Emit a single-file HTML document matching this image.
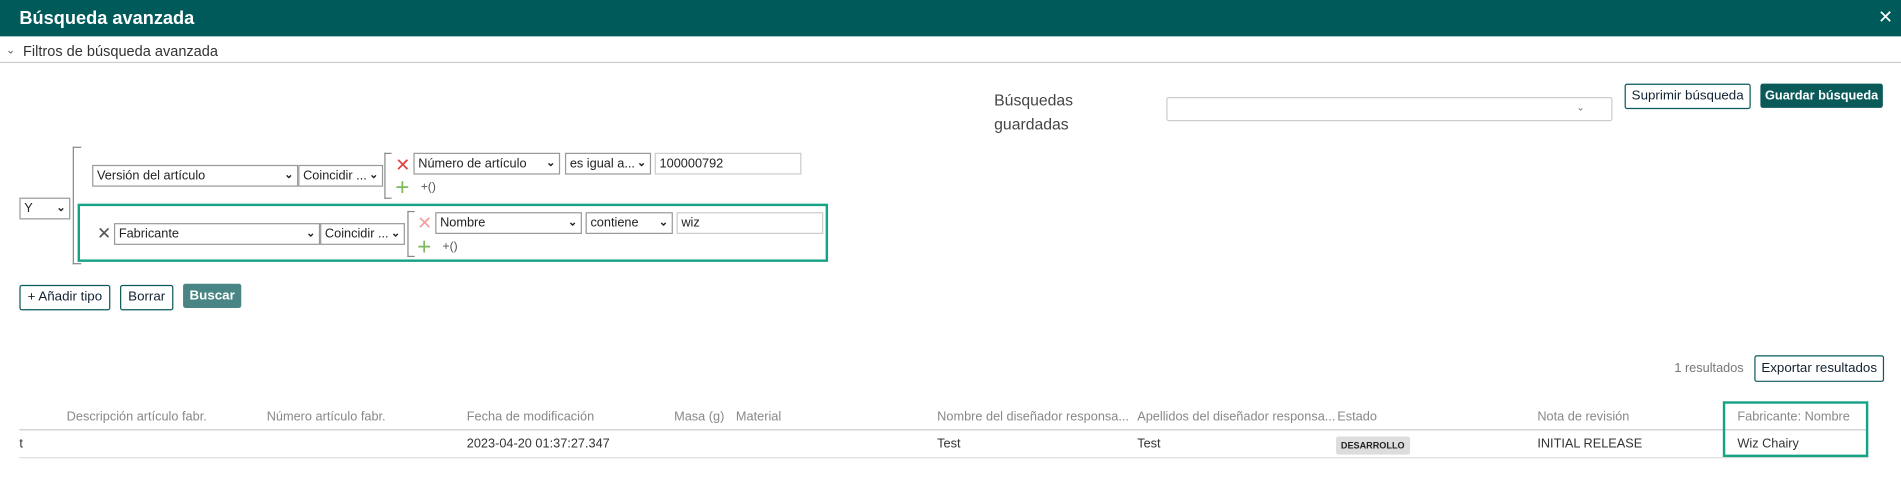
<!DOCTYPE html>
<html><head><meta charset="utf-8"><style>
*{box-sizing:border-box;margin:0;padding:0}
body{width:1901px;height:479px;overflow:hidden;background:#fff;font-family:"Liberation Sans",sans-serif;font-size:11px;color:#333;position:relative}
#w{position:absolute;left:0;top:0;width:1568px;height:395px;transform:scale(1.2124);transform-origin:0 0}
.a{position:absolute}
.hdr{left:0;top:0;width:1568px;height:30px;background:#005a5a;color:#fff}
.sel{position:absolute;border:1px solid #999;height:18px;background:#fff;font-size:10.5px;line-height:16px;padding-left:3px;color:#222;white-space:nowrap;overflow:hidden}
.chev{position:absolute;right:3px;top:-1px;font-size:9px;font-weight:bold;color:#222}
.btn{position:absolute;border:1px solid #0b5a5a;border-radius:2px;height:21px;font-size:11px;line-height:19px;text-align:center;color:#123;background:#fff;white-space:nowrap}
.th{position:absolute;top:338px;color:#888;font-size:10.5px;white-space:nowrap}
.td{position:absolute;top:360px;color:#333;font-size:10.5px;white-space:nowrap}
</style></head><body><div id="w">
<div class="a hdr"><div class="a" style="left:16px;top:7px;font-size:15px;font-weight:bold">Búsqueda avanzada</div>
<div class="a" style="left:1549px;top:5px;font-size:15px">✕</div></div>
<div class="a" style="left:5px;top:36px;font-size:9px;color:#555">⌄</div>
<div class="a" style="left:19px;top:35px;font-size:12px;color:#333">Filtros de búsqueda avanzada</div>
<div class="a" style="left:0;top:51px;width:1568px;height:1px;background:#c8cdd0"></div>

<div class="a" style="left:820px;top:73px;font-size:13px;color:#444;line-height:20px">Búsquedas<br>guardadas</div>
<div class="a" style="left:962px;top:80px;width:368px;height:20px;border:1px solid #ccc;border-radius:2px"><span class="a" style="right:22px;top:3px;font-size:8px;color:#666">⌄</span></div>
<div class="btn" style="left:1340px;top:69px;width:104px">Suprimir búsqueda</div>
<div class="btn" style="left:1452px;top:69px;width:101px;background:#0b5a5a;color:#fff;font-weight:bold;height:20px;font-size:10.5px">Guardar búsqueda</div>

<div class="sel" style="left:16px;top:163px;width:42px">Y<span class="chev">⌄</span></div>
<div class="a" style="left:60px;top:121px;width:7px;height:97px;border:1px solid #888;border-right:none"></div>

<div class="sel" style="left:76px;top:136px;width:170px">Versión del artículo<span class="chev">⌄</span></div>
<div class="sel" style="left:246px;top:136px;width:70px">Coincidir ...<span class="chev">⌄</span></div>
<div class="a" style="left:317px;top:126px;width:6px;height:38px;border:1px solid #888;border-right:none"></div>
<div class="a" style="left:326px;top:127px;color:#e04040;font-size:15px">✕</div>
<div class="sel" style="left:341px;top:126px;width:121px">Número de artículo<span class="chev">⌄</span></div>
<div class="sel" style="left:466px;top:126px;width:71px">es igual a...<span class="chev">⌄</span></div>
<div class="sel" style="left:540px;top:126px;width:121px;border-color:#ccc">100000792</div>
<div class="a" style="left:326px;top:145px;color:#7cba5a;font-size:20px;line-height:20px">+</div>
<div class="a" style="left:347px;top:149px;color:#555;font-size:10px">+()</div>

<div class="a" style="left:64px;top:168px;width:619px;height:48px;border:2px solid #16a385"></div>
<div class="a" style="left:80px;top:184px;color:#555;font-size:14px">✕</div>
<div class="sel" style="left:94px;top:184px;width:170px">Fabricante<span class="chev">⌄</span></div>
<div class="sel" style="left:264px;top:184px;width:70px">Coincidir ...<span class="chev">⌄</span></div>
<div class="a" style="left:336px;top:174px;width:6px;height:38px;border:1px solid #888;border-right:none"></div>
<div class="a" style="left:344px;top:175px;color:#f0a0a0;font-size:15px">✕</div>
<div class="sel" style="left:359px;top:175px;width:121px">Nombre<span class="chev">⌄</span></div>
<div class="sel" style="left:483px;top:175px;width:72px">contiene<span class="chev">⌄</span></div>
<div class="sel" style="left:558px;top:175px;width:121px;border-color:#ccc">wiz</div>
<div class="a" style="left:344px;top:194px;color:#7cba5a;font-size:20px;line-height:20px">+</div>
<div class="a" style="left:365px;top:198px;color:#555;font-size:10px">+()</div>

<div class="btn" style="left:16px;top:235px;width:75px">+ Añadir tipo</div>
<div class="btn" style="left:99px;top:235px;width:44px">Borrar</div>
<div class="btn" style="left:151px;top:234px;width:48px;background:#4a8585;border-color:#4a8585;color:#fff;font-weight:bold;height:20px">Buscar</div>

<div class="a" style="left:1381px;top:298px;color:#777;font-size:10.5px">1 resultados</div>
<div class="btn" style="left:1447px;top:293px;width:107px;height:22px;line-height:20px">Exportar resultados</div>

<div class="th" style="left:55px">Descripción artículo fabr.</div>
<div class="th" style="left:220px">Número artículo fabr.</div>
<div class="th" style="left:385px">Fecha de modificación</div>
<div class="th" style="left:556px">Masa (g)</div>
<div class="th" style="left:607px">Material</div>
<div class="th" style="left:773px">Nombre del diseñador responsa...</div>
<div class="th" style="left:938px">Apellidos del diseñador responsa...</div>
<div class="th" style="left:1103px">Estado</div>
<div class="th" style="left:1268px">Nota de revisión</div>
<div class="th" style="left:1433px">Fabricante: Nombre</div>
<div class="a" style="left:16px;top:354px;width:1525px;height:1px;background:#c8cdd0"></div>
<div class="td" style="left:16px">t</div>
<div class="td" style="left:385px">2023-04-20 01:37:27.347</div>
<div class="td" style="left:773px">Test</div>
<div class="td" style="left:938px">Test</div>
<div class="a" style="left:1102px;top:360px;background:#ddd;border-radius:2px;font-size:7.5px;font-weight:bold;padding:3px 4px;color:#222">DESARROLLO</div>
<div class="td" style="left:1268px">INITIAL RELEASE</div>
<div class="td" style="left:1433px">Wiz Chairy</div>
<div class="a" style="left:16px;top:377px;width:1525px;height:1px;background:#ddd"></div>
<div class="a" style="left:1421px;top:331px;width:120px;height:46px;border:2px solid #16a385"></div>
</div></body></html>
